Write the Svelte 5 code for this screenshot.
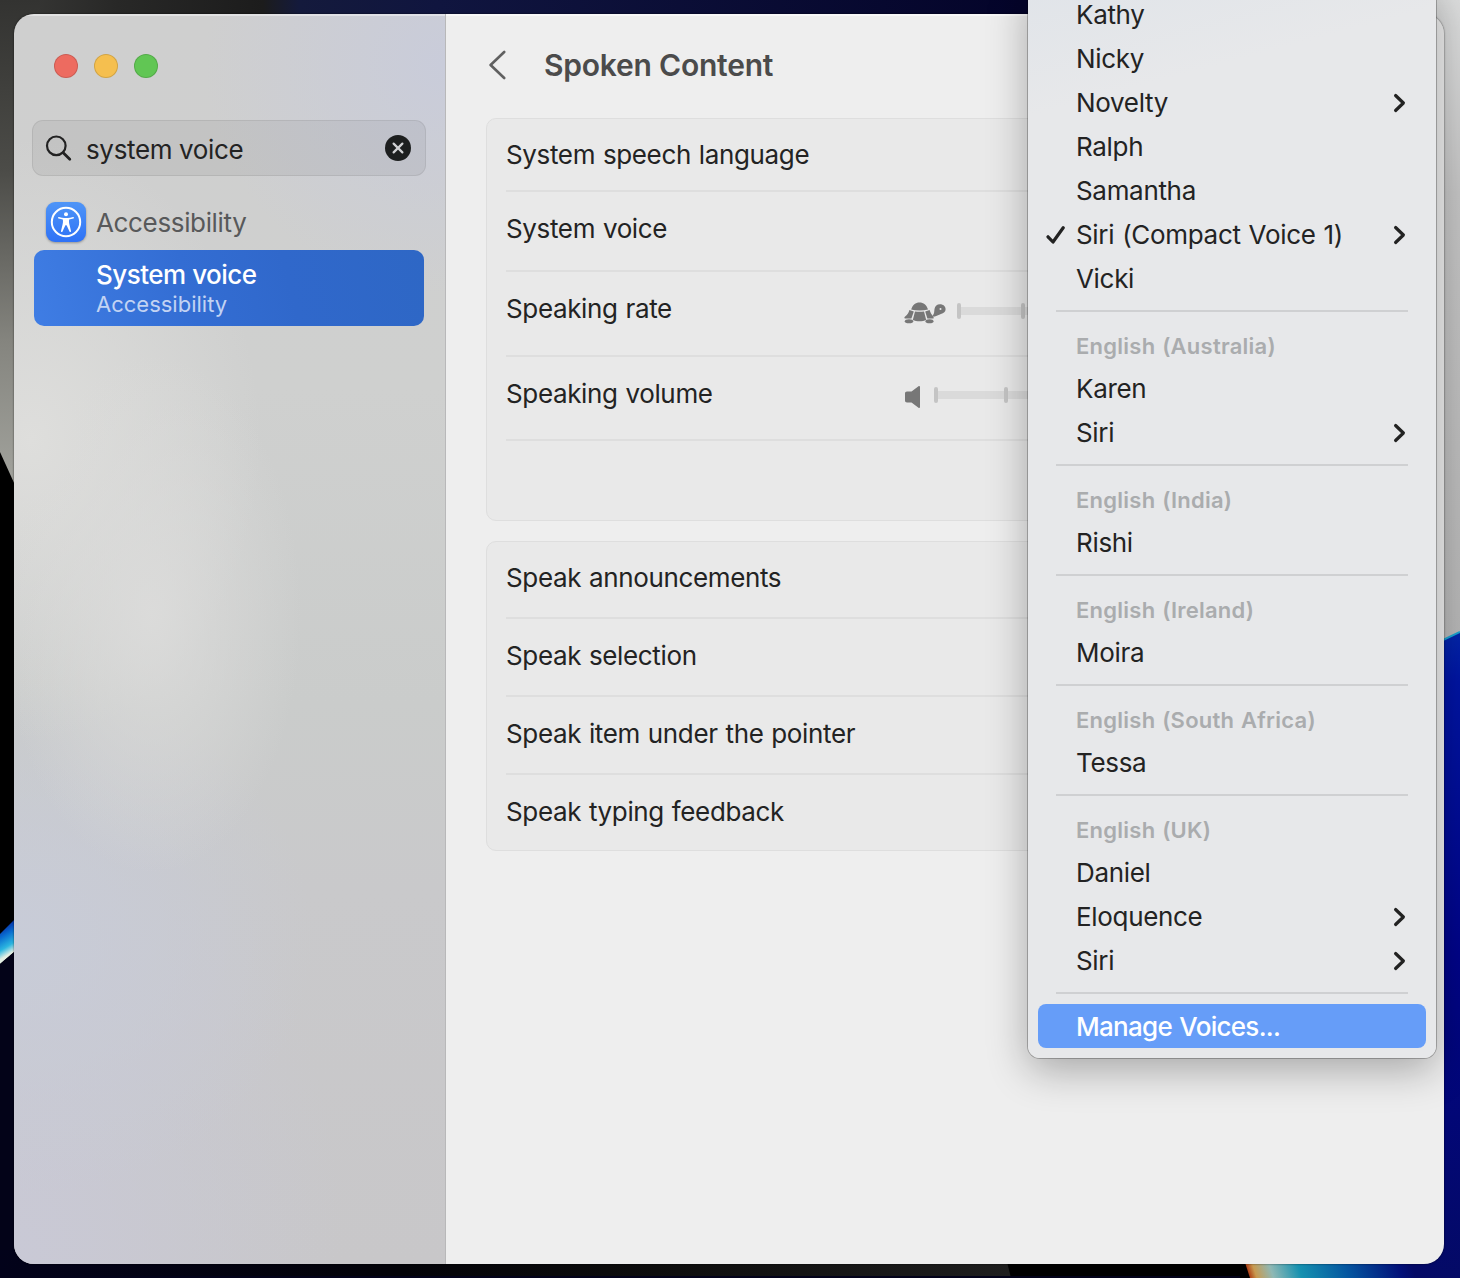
<script>
  const speech = [
    { label: 'System speech language', size: 'h73' },
    { label: 'System voice', size: 'h80' },
    { label: 'Speaking rate', size: 'h85', slider: 'rate' },
    { label: 'Speaking volume', size: 'h84', slider: 'volume' },
    { label: '', size: 'h79' }
  ];
  const toggles = [
    { label: 'Speak announcements', size: 'h77' },
    { label: 'Speak selection', size: 'h78' },
    { label: 'Speak item under the pointer', size: 'h78' },
    { label: 'Speak typing feedback', size: 'h78' }
  ];

  const groups = [
    {
      voices: [
        { name: 'Kathy' },
        { name: 'Nicky' },
        { name: 'Novelty', more: true },
        { name: 'Ralph' },
        { name: 'Samantha' },
        { name: 'Siri (Compact Voice 1)', more: true, checked: true },
        { name: 'Vicki' }
      ]
    },
    { title: 'English (Australia)', voices: [{ name: 'Karen' }, { name: 'Siri', more: true }] },
    { title: 'English (India)', voices: [{ name: 'Rishi' }] },
    { title: 'English (Ireland)', voices: [{ name: 'Moira' }] },
    { title: 'English (South Africa)', voices: [{ name: 'Tessa' }] },
    { title: 'English (UK)', voices: [{ name: 'Daniel' }, { name: 'Eloquence', more: true }, { name: 'Siri', more: true }] }
  ];
</script>

<div class="desktop">
  <svg class="wallpaper" viewBox="0 0 1460 1278" width="1460" height="1278">
    <defs>
      <linearGradient id="top" x1="0" x2="1460" y1="0" y2="0" gradientUnits="userSpaceOnUse">
        <stop offset="0" stop-color="#3a3a38" />
        <stop offset=".08" stop-color="#282827" />
        <stop offset=".18" stop-color="#1c1c1c" />
        <stop offset=".205" stop-color="#141a3c" />
        <stop offset=".3" stop-color="#10153f" />
        <stop offset=".7" stop-color="#04042a" />
      </linearGradient>
      <linearGradient id="left" x1="0" x2="0" y1="0" y2="490" gradientUnits="userSpaceOnUse">
        <stop offset="0" stop-color="#333331" />
        <stop offset=".35" stop-color="#4c4c48" />
        <stop offset=".7" stop-color="#85857f" />
        <stop offset="1" stop-color="#a3a49e" />
      </linearGradient>
      <linearGradient id="right" x1="0" x2="0" y1="0" y2="640" gradientUnits="userSpaceOnUse">
        <stop offset="0" stop-color="#dcdddd" />
        <stop offset=".3" stop-color="#c2c2c2" />
        <stop offset="1" stop-color="#b4b4b4" />
      </linearGradient>
      <linearGradient id="blue" x1="0" x2="0" y1="630" y2="1278" gradientUnits="userSpaceOnUse">
        <stop offset="0" stop-color="#0426a8" />
        <stop offset=".08" stop-color="#0014a0" />
        <stop offset=".5" stop-color="#000486" />
        <stop offset="1" stop-color="#040a66" />
      </linearGradient>
      <linearGradient id="bottom" x1="0" x2="1010" y1="0" y2="0" gradientUnits="userSpaceOnUse">
        <stop offset="0" stop-color="#02021a" />
        <stop offset=".4" stop-color="#030308" />
        <stop offset=".65" stop-color="#0d0d0d" />
        <stop offset="1" stop-color="#1e1e1e" />
      </linearGradient>
      <linearGradient id="glow" x1="1244" x2="1396" y1="1264" y2="1215" gradientUnits="userSpaceOnUse">
        <stop offset="0" stop-color="#a82a08" />
        <stop offset=".05" stop-color="#c89a50" />
        <stop offset=".15" stop-color="#8fb8b4" />
        <stop offset=".32" stop-color="#1591b0" />
        <stop offset=".6" stop-color="#0456a0" />
        <stop offset=".92" stop-color="#021078" />
        <stop offset="1" stop-color="#040a66" />
      </linearGradient>
      <linearGradient id="streak" x1="0" x2="16" y1="924" y2="950" gradientUnits="userSpaceOnUse">
        <stop offset="0" stop-color="#04189a" />
        <stop offset=".4" stop-color="#0a6ed0" />
        <stop offset=".75" stop-color="#2cb6e0" />
        <stop offset="1" stop-color="#e4efe4" />
      </linearGradient>
    </defs>
    <rect width="1460" height="1278" fill="#000" />
    <rect width="1200" height="40" fill="url(#top)" />
    <path d="M0 0H40V540L0 452Z" fill="url(#left)" />
    <path d="M0 934L40 894V930L0 964Z" fill="url(#streak)" />
    <path d="M0 964L40 930V1278H0Z" fill="#030318" />
    <path d="M0 1250H1004L1011 1278H0Z" fill="url(#bottom)" />
    <path d="M1241 1250L1250 1278H1420V1250Z" fill="url(#glow)" />
    <rect x="1400" width="60" height="660" fill="url(#right)" />
    <path d="M1420 651L1460 632V1278H1420Z" fill="url(#blue)" />
    <path d="M1420 651L1460 632" stroke="#1aa0cc" stroke-width="2" />
    <rect y="1276" width="1240" height="2" fill="#02021a" />
  </svg>

  <main class="window">
    <aside>
      <div class="lights"><i class="red"></i><i class="yellow"></i><i class="green"></i></div>
      <div class="search">
        <svg class="glass" viewBox="0 0 28 28" width="28" height="28">
          <circle cx="11.3" cy="11.8" r="9.3" fill="none" stroke="#222" stroke-width="2.2" />
          <path d="M18.2 18.700L24.800 25.300" stroke="#222" stroke-width="2.8" stroke-linecap="round" />
        </svg>
        <span class="query">system voice</span>
        <svg class="clear" viewBox="0 0 26 26" width="26" height="26">
          <circle cx="13" cy="13" r="13" fill="#1d1f1f" />
          <path d="M8.600 8.600l8.800 8.800M17.400 8.600l-8.800 8.800" stroke="#d0d1d3" stroke-width="2.200" stroke-linecap="round" />
        </svg>
      </div>
      <div class="category">
        <svg class="access" viewBox="0 0 40 40" width="40" height="40">
          <defs>
            <linearGradient id="tile" x1="0" x2="0" y1="0" y2="1">
              <stop offset="0" stop-color="#4f95f7" />
              <stop offset="1" stop-color="#2f72f6" />
            </linearGradient>
          </defs>
          <rect width="40" height="40" rx="9" fill="url(#tile)" />
          <circle cx="20" cy="20" r="14.200" fill="none" stroke="#fff" stroke-width="2" />
          <circle cx="20" cy="12.200" r="2" fill="#fff" />
          <path d="M12.900 15c2.200.6 4 .9 5.400 1h3.400c1.400-.1 3.200-.4 5.400-1 .9-.2 1.200 1.200.3 1.500-1.600.5-3 .8-4.200 1-.4 1.800-.1 3.600.3 5.300l1.500 6.100c.2 1-1.100 1.400-1.500.5L20.600 23.300h-1.200l-2.900 6.100c-.4.9-1.700.5-1.500-.5l1.500-6.100c.4-1.700.7-3.500.3-5.300-1.200-.2-2.600-.5-4.200-1-.9-.3-.6-1.700.3-1.500Z" fill="#fff" />
        </svg>
        <span>Accessibility</span>
      </div>
      <div class="result">
        <strong>System voice</strong>
        <small>Accessibility</small>
      </div>
    </aside>

    <section class="content">
      <header>
        <svg viewBox="0 0 18 30" width="18" height="30">
          <path d="M16.200 2L2.600 15L16.200 28" fill="none" stroke="#606060" stroke-width="2.600" stroke-linecap="round" stroke-linejoin="round" />
        </svg>
        <h1>Spoken Content</h1>
      </header>
      <div class="card">
        {#each speech as row}
          <div class="row {row.size}">
            <span class="label">{row.label}</span>
            {#if row.slider === 'rate'}
              <svg class="turtle" viewBox="0 0 42 22" width="42" height="22">
                <g fill="#777">
                  <path d="M7.200 7.600C8.500 3 11.500.5 15.500.5s7.200 2.500 8.500 7.100c-2.500.6-5.400.9-8.500.9s-6-.3-8.500-.9Z" />
                  <path d="M11 9.500q4.500.5 9 0l2.200 8.500c-3.600 1.800-9.800 1.800-13.400 0Z" />
                  <path d="M5.400 8l4.400 1.400L7.400 16.500H1.200C-.2 16.500.3 15 1.400 14.200 3.600 12.600 4.600 10.800 5.400 8Z" />
                  <path d="M21.200 9.400L25.600 8c.9 3 2 5 4 6.700v1.800h-6.200Z" />
                  <path d="M28.600 13.500c1.800-1 1.500-3.700 1.900-6.400.5-3.200 2.500-4.800 5.400-4.800 3.500 0 5.700 2.200 5.700 5 0 2.700-1.900 3.900-4.700 4.700-2 .6-5 2.500-7.100 2.700Z" />
                  <ellipse cx="5" cy="19.200" rx="4.200" ry="2" />
                  <ellipse cx="25.500" cy="19.200" rx="4" ry="2" />
                </g>
                <circle cx="36.500" cy="7" r="1" fill="#e9e9e9" />
              </svg>
              <div class="track rate"><b></b><b></b></div>
            {:else if row.slider === 'volume'}
              <svg class="speaker" viewBox="0 0 16 22" width="16" height="22">
                <path d="M2 5.500H6.500L13.500.3C14.300-.2 15 .1 15 1v20c0 .9-.7 1.200-1.500.7L6.500 16.500H2c-1.300 0-2-.7-2-2v-7c0-1.300.7-2 2-2Z" fill="#777" />
              </svg>
              <div class="track volume"><b></b><b></b></div>
            {/if}
          </div>
        {/each}
      </div>
      <div class="card second">
        {#each toggles as row}
          <div class="row {row.size}"><span class="label">{row.label}</span></div>
        {/each}
      </div>
    </section>
  </main>

  <nav class="menu">
    {#each groups as group}
      {#if group.title}<div class="caption">{group.title}</div>{/if}
      {#each group.voices as voice}
        <div class="item">
          {#if voice.checked}
            <svg class="check" viewBox="0 0 20 20" width="20" height="20">
              <path d="M2 11.800L7 17L17.200 2.800" fill="none" stroke="#222" stroke-width="3.200" stroke-linecap="round" stroke-linejoin="round" />
            </svg>
          {/if}
          <span>{voice.name}</span>
          {#if voice.more}
            <svg class="more" viewBox="0 0 14 20" width="14" height="20">
              <path d="M3.600 2.500L11.400 10L3.600 17.500" fill="none" stroke="#222" stroke-width="3.200" stroke-linecap="round" stroke-linejoin="round" />
            </svg>
          {/if}
        </div>
      {/each}
      <hr />
    {/each}
    <div class="item active"><span>Manage Voices...</span></div>
  </nav>
</div>

<style>
  :global(body) {
    overflow: hidden;
  }
  .desktop {
    position: relative;
    box-sizing: border-box;
    width: 1460px;
    height: 1278px;
    padding: 14px 16px 14px 14px;
    overflow: hidden;
    font-family: Inter, 'Liberation Sans', sans-serif;
    font-size: 26px;
    line-height: 32px;
    letter-spacing: -0.35px;
    color: #232323;
  }
  .wallpaper {
    position: absolute;
    inset: 0;
  }
  .window {
    position: relative;
    display: flex;
    height: 1250px;
    border-radius: 20px;
    overflow: hidden;
    box-shadow: 0 0 2px rgba(0, 0, 0, 0.7);
  }
  aside {
    box-sizing: border-box;
    width: 432px;
    padding: 40px 19px 0 18px;
    border-right: 1px solid #b8b8b9;
    box-shadow: inset 0 2px 0 rgba(255, 255, 255, 0.4);
    background:
      radial-gradient(ellipse 240px 230px at 100% 4%, #c9ccda 0%, rgba(201, 204, 218, 0) 100%),
      radial-gradient(ellipse 150px 260px at 32% 48%, rgba(220, 220, 219, 0.9) 0%, rgba(220, 220, 219, 0) 100%),
      radial-gradient(ellipse 230px 300px at 4% 34%, #dededc 0%, rgba(220, 220, 218, 0) 100%),
      radial-gradient(ellipse 300px 260px at 0% 74%, #c8ccd8 0%, rgba(200, 204, 216, 0) 100%),
      radial-gradient(ellipse 330px 500px at 0% 100%, #c9c9d6 0%, rgba(201, 201, 214, 0) 100%),
      linear-gradient(180deg, #cfcfcf 0%, #cfd0cf 30%, #cacccb 55%, #c9c9cb 70%, #c8c7c9 100%);
  }
  .lights {
    display: flex;
    gap: 16px;
    padding-left: 22px;
  }
  .lights i {
    box-sizing: border-box;
    width: 24px;
    height: 24px;
    border: 1px solid rgba(0, 0, 0, 0.14);
    border-radius: 50%;
  }
  .red { background: #ed6b60; }
  .yellow { background: #f5bf4f; }
  .green { background: #61c654; }
  .search {
    box-sizing: border-box;
    display: flex;
    align-items: center;
    height: 56px;
    margin-top: 42px;
    padding: 0 14px 0 12px;
    border: 1px solid rgba(0, 0, 0, 0.07);
    border-radius: 11px;
    background: rgba(0, 0, 0, 0.055);
  }
  .query {
    flex: 1;
    margin: 3px 0 0 13px;
  }
  .category {
    display: flex;
    align-items: center;
    gap: 10px;
    margin-top: 26px;
    padding-left: 14px;
    color: #58595a;
  }
  .category span {
    padding-top: 2px;
  }
  .access {
    filter: drop-shadow(0 1px 1px rgba(0, 0, 0, 0.3));
  }
  .result {
    box-sizing: border-box;
    display: flex;
    flex-direction: column;
    width: 390px;
    height: 76px;
    margin: 8px 0 0 2px;
    padding: 9px 0 0 62px;
    border-radius: 10px;
    background: linear-gradient(75deg, #3f7de4 0%, #336dd3 40%, #3068cb 65%, #2e67c5 100%);
    color: #fff;
  }
  .result strong {
    font-weight: 500;
    letter-spacing: -0.5px;
  }
  .result small {
    font-size: 22px;
    line-height: 26px;
    letter-spacing: 0;
    color: #c2d3f3;
  }
  .content {
    flex: 1;
    background: #eee;
    box-shadow: inset 0 2px 0 #f8f8f8;
  }
  header {
    box-sizing: border-box;
    display: flex;
    align-items: center;
    gap: 38px;
    height: 104px;
    padding: 0 0 2px 42px;
    color: #4b4b4b;
  }
  h1 {
    margin: 0;
    font-size: 30px;
    line-height: 36px;
    font-weight: 600;
    letter-spacing: -0.22px;
  }
  .card {
    box-sizing: border-box;
    width: 938px;
    margin-left: 40px;
    border: 1px solid #dedede;
    border-radius: 10px;
    background: #e9e9e9;
    letter-spacing: -0.36px;
    word-spacing: 0.9px;
  }
  .second {
    margin-top: 20px;
    height: 310px;
    overflow: hidden;
  }
  .row {
    box-sizing: border-box;
    display: flex;
    align-items: flex-start;
    margin: 0 19px;
    padding-top: 20px;
    border-bottom: 2px solid #dedede;
  }
  .row + .row .label {
    padding-top: 1px;
  }
  .row:last-child {
    border-bottom: 0;
  }
  .h73 { height: 73px; }
  .h77 { height: 77px; }
  .h78 { height: 78px; }
  .h79 { height: 79px; }
  .h80 { height: 80px; }
  .h84 { height: 84px; }
  .h85 { height: 85px; }
  .label {
    width: 398px;
  }
  .turtle { margin-top: 10px; }
  .speaker { margin: 9px 0 0 1px; }
  .track {
    display: flex;
    align-items: center;
    width: 300px;
    height: 8px;
    background: #dadada;
  }
  .track b {
    width: 4px;
    height: 16px;
    border-radius: 2px;
    background: #c4c4c4;
  }
  .rate { gap: 60px; margin: 15px 0 0 11px; }
  .volume { gap: 66px; margin: 14px 0 0 13px; }
  .menu {
    position: absolute;
    left: 1028px;
    top: -18px;
    box-sizing: border-box;
    width: 408px;
    height: 1076px;
    padding: 10px;
    border-radius: 12px;
    background: linear-gradient(165deg, #e0e4e9 0, #e7e8ea 130px);
    box-shadow: 0 0 0 1px rgba(0, 0, 0, 0.25), 0 12px 40px rgba(0, 0, 0, 0.3);
    letter-spacing: -0.32px;
    word-spacing: 1px;
  }
  .item {
    position: relative;
    box-sizing: border-box;
    display: flex;
    justify-content: space-between;
    align-items: center;
    height: 44px;
    padding: 2px 20px 0 38px;
  }
  .check {
    position: absolute;
    left: 8px;
    top: 13px;
  }
  .caption {
    height: 44px;
    padding-left: 38px;
    box-sizing: border-box;
    font-size: 22px;
    line-height: 48px;
    font-weight: 600;
    letter-spacing: 0.25px;
    color: #aaacae;
  }
  hr {
    height: 2px;
    margin: 10px 18px;
    border: 0;
    background: #cfd0d2;
  }
  .active {
    border-radius: 8px;
    background: #669df8;
    color: #fff;
    font-weight: 500;
    letter-spacing: -0.7px;
  }
</style>
